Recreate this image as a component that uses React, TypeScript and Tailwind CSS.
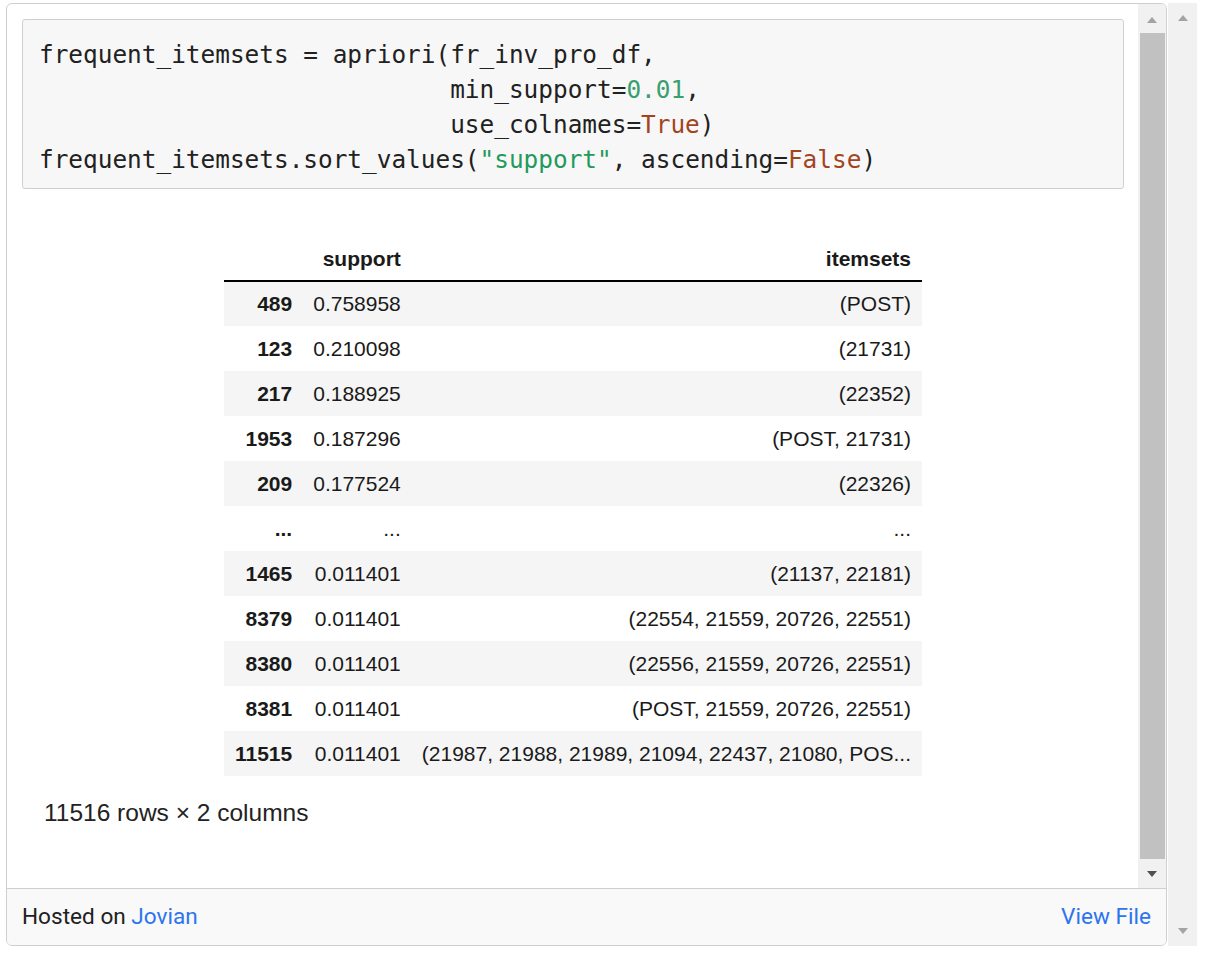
const rows: [string, string, string][] = [
  ['489', '0.758958', '(POST)'],
  ['123', '0.210098', '(21731)'],
  ['217', '0.188925', '(22352)'],
  ['1953', '0.187296', '(POST, 21731)'],
  ['209', '0.177524', '(22326)'],
  ['...', '...', '...'],
  ['1465', '0.011401', '(21137, 22181)'],
  ['8379', '0.011401', '(22554, 21559, 20726, 22551)'],
  ['8380', '0.011401', '(22556, 21559, 20726, 22551)'],
  ['8381', '0.011401', '(POST, 21559, 20726, 22551)'],
  ['11515', '0.011401', '(21987, 21988, 21989, 21094, 22437, 21080, POS...'],
]

function Arrow({ up, color }: { up?: boolean; color: string }) {
  return (
    <svg width="10" height="6" viewBox="0 0 10 6">
      <path d={up ? 'M0 6 L5 0 L10 6 Z' : 'M0 0 L10 0 L5 6 Z'} fill={color} />
    </svg>
  )
}

function CodeCell() {
  return (
    <div className="rounded-[3px] border border-[#cfcfcf] bg-[#f7f7f7] pl-[16px] pt-[17px] pb-[11px] font-['DejaVu_Sans_Mono',monospace] text-[24.4px] leading-[35px] text-[#212121] whitespace-pre">
      <div>frequent_itemsets = apriori(fr_inv_pro_df,</div>
      <div>
        {'                            min_support='}
        <span className="text-[#3a9f6e]">0.01</span>,
      </div>
      <div>
        {'                            use_colnames='}
        <span className="text-[#a2451f]">True</span>)
      </div>
      <div>
        frequent_itemsets.sort_values(<span className="text-[#23995c]">"support"</span>, ascending=
        <span className="text-[#a2451f]">False</span>)
      </div>
    </div>
  )
}

function DataFrame() {
  return (
    <div className="font-['Liberation_Sans',Arial,sans-serif] text-[#1a1a1a]">
      <table className="mx-auto mt-[48px] border-collapse text-[21px]">
        <thead>
          <tr className="h-[44px] border-b-[2px] border-black">
            <th className="px-[10.5px]"></th>
            <th className="px-[10.5px] text-right font-bold">support</th>
            <th className="px-[10.5px] text-right font-bold">itemsets</th>
          </tr>
        </thead>
        <tbody>
          {rows.map((r, i) => (
            <tr key={i} className={`h-[45px] ${i % 2 === 0 ? 'bg-[#f5f5f5]' : 'bg-white'}`}>
              <th className="px-[10.5px] text-right font-bold">{r[0]}</th>
              <td className="px-[10.5px] text-right">{r[1]}</td>
              <td className="px-[10.5px] text-right whitespace-nowrap">{r[2]}</td>
            </tr>
          ))}
        </tbody>
      </table>
      <div className="mt-[23px] pl-[22px] text-[24.5px] leading-[28px] text-[#222]">11516 rows × 2 columns</div>
    </div>
  )
}

export default function App() {
  return (
    <div className="flex h-[956px] w-[1205px] bg-white pl-[6px] pt-[3px]">
      <div className="flex h-[943px] w-[1161px] flex-col overflow-hidden rounded-[6px] border border-[#cfcfcf] bg-white">
        <div className="flex min-h-0 flex-1">
          <div className="flex-1 pl-[15px] pr-[14px] pt-[15px]">
            <CodeCell />
            <DataFrame />
          </div>
          <div className="flex w-[28px] flex-col items-center bg-[#f1f1f1]">
            <div className="flex h-[29px] items-center justify-center pt-[2px]">
              <Arrow up color="#a3a3a3" />
            </div>
            <div className="w-[25px] flex-1 bg-[#c1c1c1]"></div>
            <div className="flex h-[29px] items-center justify-center">
              <Arrow color="#505050" />
            </div>
          </div>
        </div>
        <div className="flex h-[57px] items-center justify-between border-t border-[#cfcfcf] bg-[#f9f9f9] px-[15px] font-['Roboto',sans-serif] text-[22.6px] text-[#212121]">
          <div>
            Hosted on <span className="text-[#2d74f0]">Jovian</span>
          </div>
          <div className="text-[#2d74f0]">View File</div>
        </div>
      </div>
      <div className="ml-[1px] flex h-[943px] w-[29px] flex-col items-center justify-between bg-[#f1f1f1] py-[12px]">
        <Arrow up color="#a3a3a3" />
        <Arrow color="#a3a3a3" />
      </div>
    </div>
  )
}
